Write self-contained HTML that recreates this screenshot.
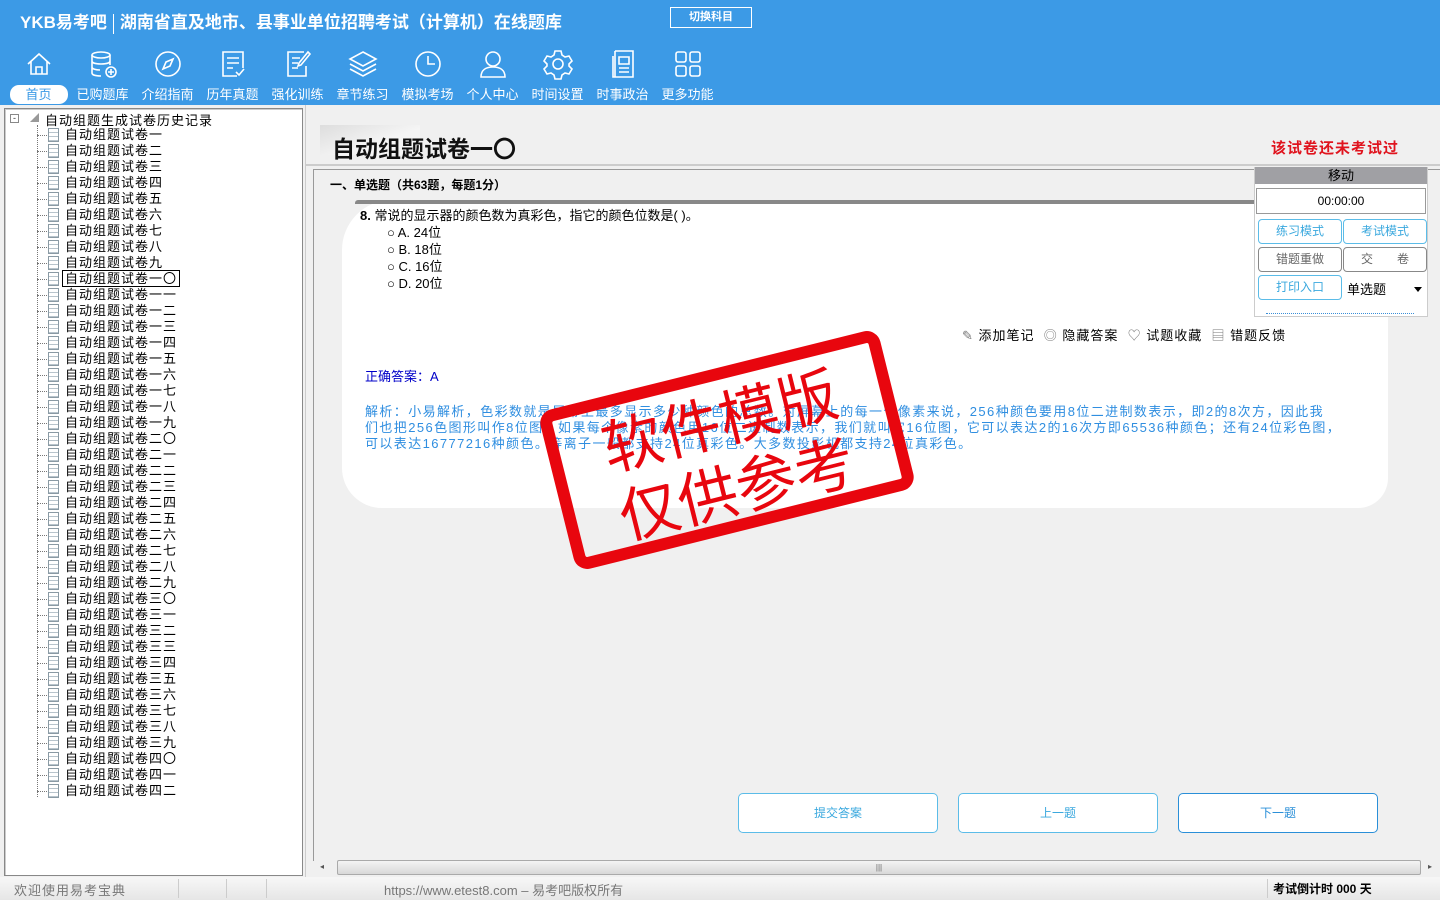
<!DOCTYPE html>
<html><head><meta charset="utf-8"><style>
*{margin:0;padding:0;box-sizing:border-box}
body{width:1440px;height:900px;overflow:hidden;background:#f0f0f0;font-family:"Liberation Sans","Noto Sans CJK SC",sans-serif;position:relative;font-size:13px}
.abs{position:absolute}
#hdr{left:0;top:0;width:1440px;height:105px;background:#3c9ae6}
.t1{left:20px;top:8px;color:#fff;font-weight:bold;font-size:17px;white-space:nowrap}
.sw{left:670px;top:7px;width:82px;height:21px;border:1px solid #fff;color:#fff;font-size:11px;text-align:center;line-height:19px;font-weight:bold}
.nav{top:48px;width:65px;text-align:center;color:#fff;font-size:13px}
.nav svg{display:block;margin:0 auto 5px;width:32px;height:32px}
.nav span{display:inline-block;height:19px;line-height:19px;white-space:nowrap}
.home span{background:#fff;color:#3c9ae6;border-radius:9px;width:58px}
#tree{left:4px;top:108px;width:299px;height:768px;background:#fff;border:1px solid #888;box-shadow:inset 1px 1px 0 #ccc}
.it{position:absolute;left:60px;font-size:13px;color:#000;white-space:nowrap;line-height:16px;letter-spacing:1px}
.ic{position:absolute;left:-17px;top:1px;width:11px;height:14px;border:1px solid #8a9aa4;background:repeating-linear-gradient(#fff 0 3px,#b8c4cc 3px 4px)}
.dl{position:absolute;left:-28px;top:8px;width:10px;border-top:1px dotted #777}
#status{left:0;top:877px;width:1440px;height:23px;background:linear-gradient(#f7f7f7,#e6e6e6);color:#777;font-size:13px}
</style></head><body>
<div id="hdr" class="abs">
<div class="abs t1">YKB易考吧<span style="display:inline-block;width:1px;height:20px;background:#fff;vertical-align:middle;margin:0 6px"></span>湖南省直及地市、县事业单位招聘考试（计算机）在线题库</div>
<div class="abs sw">切换科目</div>
</div>
<div class="abs nav home" style="left:6px"><svg viewBox="0 0 32 32" fill="none" stroke="#fff" stroke-width="1.6"><path d="M5 16 16 6 27 16M8 13v13h16V13M13 26v-7h6v7"/></svg><span>首页</span></div>
<div class="abs nav" style="left:70px"><svg viewBox="0 0 32 32" fill="none" stroke="#fff" stroke-width="1.6"><ellipse cx="14" cy="7" rx="9" ry="3"/><path d="M5 7v18c0 2 4 3 9 3M23 7v10M5 13c0 2 4 3 9 3s9-1 9-3M5 19c0 2 4 3 8 3"/><circle cx="24" cy="24" r="5"/><path d="M24 21v6M21 24h6"/></svg><span>已购题库</span></div>
<div class="abs nav" style="left:135px"><svg viewBox="0 0 32 32" fill="none" stroke="#fff" stroke-width="1.6"><circle cx="16" cy="16" r="12"/><path d="M21 11l-3 7-7 3 3-7z"/></svg><span>介绍指南</span></div>
<div class="abs nav" style="left:200px"><svg viewBox="0 0 32 32" fill="none" stroke="#fff" stroke-width="1.6"><path d="M20 28H6V4h20v16M10 10h12M10 15h12M10 20h6M19 24l3 3 5-6"/></svg><span>历年真题</span></div>
<div class="abs nav" style="left:265px"><svg viewBox="0 0 32 32" fill="none" stroke="#fff" stroke-width="1.6"><path d="M24 18v10H6V4h16M10 10h8M10 15h6M10 20h6M28 6 19 17l-3 1 1-3 9-11z"/></svg><span>强化训练</span></div>
<div class="abs nav" style="left:330px"><svg viewBox="0 0 32 32" fill="none" stroke="#fff" stroke-width="1.6"><path d="M16 4 29 11 16 18 3 11zM3 16l13 7 13-7M3 21l13 7 13-7"/></svg><span>章节练习</span></div>
<div class="abs nav" style="left:395px"><svg viewBox="0 0 32 32" fill="none" stroke="#fff" stroke-width="1.6"><circle cx="16" cy="16" r="12"/><path d="M16 8v8h7"/></svg><span>模拟考场</span></div>
<div class="abs nav" style="left:460px"><svg viewBox="0 0 32 32" fill="none" stroke="#fff" stroke-width="1.6"><circle cx="16" cy="11" r="7"/><path d="M4 29c0-7 5-10 12-10s12 3 12 10z"/></svg><span>个人中心</span></div>
<div class="abs nav" style="left:525px"><svg viewBox="0 0 32 32" fill="none" stroke="#fff" stroke-width="1.6"><path d="M13 3h6l1 4 3 2 4-1 3 5-3 3v2l3 3-3 5-4-1-3 2-1 4h-6l-1-4-3-2-4 1-3-5 3-3v-2L2 13l3-5 4 1 3-2z"/><circle cx="16" cy="16" r="5"/></svg><span>时间设置</span></div>
<div class="abs nav" style="left:590px"><svg viewBox="0 0 32 32" fill="none" stroke="#fff" stroke-width="1.6"><path d="M8 3h18v26H6V8M8 3v26M12 9h10v7H12zM12 20h10M12 24h10"/></svg><span>时事政治</span></div>
<div class="abs nav" style="left:655px"><svg viewBox="0 0 32 32" fill="none" stroke="#fff" stroke-width="1.6"><rect x="4" y="4" width="10" height="10" rx="2"/><rect x="18" y="4" width="10" height="10" rx="2"/><rect x="4" y="18" width="10" height="10" rx="2"/><rect x="18" y="18" width="10" height="10" rx="2"/></svg><span>更多功能</span></div>

<div id="tree" class="abs">
<div class="abs" style="left:5px;top:5px;width:9px;height:9px;border:1px solid #888;font-size:9px;line-height:6px;text-align:center;color:#333">-</div>
<div class="abs" style="left:25px;top:4px;width:0;height:0;border-left:9px solid transparent;border-bottom:9px solid #999"></div>
<div class="abs" style="left:40px;top:1px;letter-spacing:1px">自动组题生成试卷历史记录</div>
<div class="abs" style="left:32px;top:16px;height:672px;border-left:1px dotted #777"></div>
<div id="items"></div>
</div>

<div class="abs" style="left:305px;top:105px;width:1135px;height:772px;background:#f0f0f0;border-left:1px solid #ccc"></div>
<div class="abs" style="left:320px;top:125px;width:100px;height:30px;background:linear-gradient(160deg,#ddd,#f5f5f5 60%);"></div>
<div class="abs" style="left:332px;top:130px;font-size:23px;font-weight:bold;color:#111">自动组题试卷一〇</div>
<div class="abs" style="left:1271px;top:137px;font-size:15px;font-weight:bold;color:#e0141e;letter-spacing:1px">该试卷还未考试过</div>
<div class="abs" style="left:305px;top:164px;width:1135px;height:2px;background:#ccc"></div>
<div class="abs" style="left:313px;top:169px;width:1127px;height:692px;border:1px solid #999;border-right:none;background:#f0f0f0"></div>
<div class="abs" style="left:330px;top:176px;font-size:12px;font-weight:bold;color:#000">一、单选题（共63题，每题1分）</div>
<div class="abs" style="left:342px;top:200px;width:1046px;height:308px;background:#fff;border-radius:50px 0 30px 40px"></div>
<div class="abs" style="left:355px;top:200px;width:900px;height:4px;background:#888;border-radius:3px 0 0 0"></div>
<div class="abs" style="left:360px;top:205px;font-size:13px;color:#000"><b>8.</b> 常说的显示器的颜色数为真彩色，指它的颜色位数是( )。</div>
<div class="abs" style="left:387px;top:224px;font-size:13px;line-height:17px;color:#000">
<div>○ A. 24位</div><div>○ B. 18位</div><div>○ C. 16位</div><div>○ D. 20位</div></div>
<div class="abs" style="left:962px;top:325px;font-size:13px;color:#000;letter-spacing:1px;white-space:nowrap"><span style="color:#777">✎</span> 添加笔记 &nbsp;<span style="color:#777">◎</span> 隐藏答案 &nbsp;<span style="color:#777">♡</span> 试题收藏 &nbsp;<span style="color:#777">▤</span> 错题反馈</div>
<div class="abs" style="left:365px;top:366px;font-size:13px;color:#0000c8">正确答案：A</div>
<div class="abs" style="left:365px;top:404px;font-size:13px;line-height:16px;color:#2f8ee0;white-space:nowrap;letter-spacing:1.4px">解析：小易解析，色彩数就是屏幕上最多显示多少种颜色的总数。对屏幕上的每一个像素来说，256种颜色要用8位二进制数表示，即2的8次方，因此我<br>们也把256色图形叫作8位图；如果每个像素的颜色用16位二进制数表示，我们就叫它16位图，它可以表达2的16次方即65536种颜色；还有24位彩色图，<br>可以表达16777216种颜色。等离子一般都支持24位真彩色。大多数投影机都支持24位真彩色。</div>

<div class="abs" style="left:1254px;top:167px;width:174px;height:150px;background:#fff;border:1px solid #ccc"></div>
<div class="abs" style="left:1255px;top:167px;width:172px;height:17px;background:#a0a0a4;color:#000;text-align:center;font-size:13px;line-height:17px">移动</div>
<div class="abs" style="left:1256px;top:188px;width:170px;height:26px;border:1px solid #999;text-align:center;line-height:24px;font-size:12px">00:00:00</div>
<div class="abs" style="left:1258px;top:219px;width:84px;height:25px;border:1px solid #5bbce8;border-radius:4px;color:#3aa8de;text-align:center;line-height:23px;font-size:12px">练习模式</div>
<div class="abs" style="left:1343px;top:219px;width:84px;height:25px;border:1px solid #5bbce8;border-radius:4px;color:#3aa8de;text-align:center;line-height:23px;font-size:12px">考试模式</div>
<div class="abs" style="left:1258px;top:247px;width:84px;height:25px;border:1px solid #888;border-radius:4px;color:#666;text-align:center;line-height:23px;font-size:12px">错题重做</div>
<div class="abs" style="left:1343px;top:247px;width:84px;height:25px;border:1px solid #888;border-radius:4px;color:#666;text-align:center;line-height:23px;font-size:12px">交　　卷</div>
<div class="abs" style="left:1258px;top:275px;width:84px;height:25px;border:1px solid #5bbce8;border-radius:4px;color:#3aa8de;text-align:center;line-height:23px;font-size:12px">打印入口</div>
<div class="abs" style="left:1347px;top:279px;font-size:13px">单选题</div>
<div class="abs" style="left:1414px;top:287px;border:4px solid transparent;border-top:5px solid #000"></div>
<div class="abs" style="left:1266px;top:313px;width:148px;border-top:1px dotted #3a8fd8"></div>

<div class="abs" style="left:552px;top:368px;width:350px;height:164px;border:12px solid #e8060e;border-radius:14px;transform:rotate(-14deg);color:#e8060e;text-align:center;font-size:60px;line-height:70px;font-family:'Noto Sans CJK SC',sans-serif;padding-top:2px">软件模版<br>仅供参考</div>

<div class="abs" style="left:738px;top:793px;width:200px;height:40px;border:1px solid #5bbce8;border-radius:5px;background:#fff;color:#3aa8de;text-align:center;line-height:38px;font-size:12px">提交答案</div>
<div class="abs" style="left:958px;top:793px;width:200px;height:40px;border:1px solid #5bbce8;border-radius:5px;background:#fff;color:#3aa8de;text-align:center;line-height:38px;font-size:12px">上一题</div>
<div class="abs" style="left:1178px;top:793px;width:200px;height:40px;border:1px solid #2a8fd8;border-radius:5px;background:#fff;color:#2a8fd8;text-align:center;line-height:38px;font-size:12px">下一题</div>
<div class="abs" style="left:314px;top:858px;width:1126px;height:18px;background:#f0f0f0"></div>
<div class="abs" style="left:337px;top:860px;width:1084px;height:15px;border:1px solid #aaa;border-radius:2px;background:linear-gradient(#f4f4f4,#d8d8d8);text-align:center;font-size:8px;line-height:13px;color:#666">|||</div>
<div class="abs" style="left:320px;top:862px;font-size:8px;color:#555">◂</div>
<div class="abs" style="left:1428px;top:862px;font-size:8px;color:#555">▸</div>

<div id="status" class="abs">
<div class="abs" style="left:14px;top:3px;letter-spacing:1px">欢迎使用易考宝典</div>
<div class="abs" style="left:178px;top:2px;height:19px;border-left:1px solid #ccc"></div>
<div class="abs" style="left:226px;top:2px;height:19px;border-left:1px solid #ccc"></div>
<div class="abs" style="left:266px;top:2px;height:19px;border-left:1px solid #ccc"></div>
<div class="abs" style="left:384px;top:3px;font-size:13px">https://www.etest8.com – 易考吧版权所有</div>
<div class="abs" style="left:1267px;top:2px;height:19px;border-left:1px solid #ccc"></div>
<div class="abs" style="left:1273px;top:3px;color:#000;font-weight:bold;font-size:12px">考试倒计时 000 天</div>
</div>
<script>
var n=['一','二','三','四','五','六','七','八','九'];
function nm(i){if(i<10)return n[i-1];var t=Math.floor(i/10),u=i%10;return (t==1?'一':n[t-1])+(u==0?'〇':n[u-1]);}
var h='';for(var i=1;i<=42;i++){var y=18+(i-1)*16;var sel=i==10?'outline:1px solid #000;outline-offset:0;padding:0 2px;margin-left:-2px':'';h+='<div class="it" style="top:'+y+'px"><span class="dl"></span><span class="ic"></span><span style="'+sel+'">自动组题试卷'+nm(i)+'</span></div>';}
document.getElementById('items').innerHTML=h;
</script>
</body></html>
